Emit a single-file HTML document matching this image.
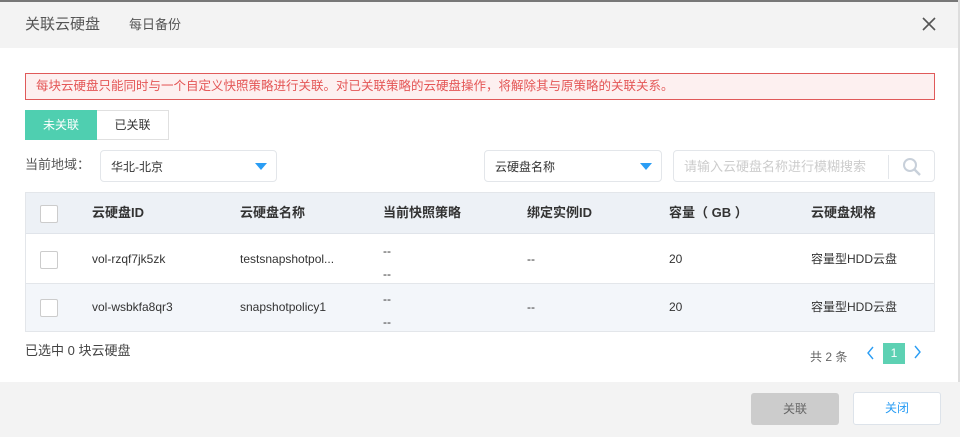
<!DOCTYPE html><html><head><meta charset="utf-8"><style>
*{box-sizing:border-box;margin:0;padding:0}
body{width:960px;height:437px;overflow:hidden;background:#fff;font-family:"Liberation Sans","Noto Sans CJK SC",sans-serif;font-size:12px;color:#333;position:relative;line-height:16px}
.a{position:absolute}
.top{left:0;top:0;width:960px;height:48px;background:#f3f3f3;border-top:2px solid #777}
.foot{left:0;top:382px;width:960px;height:55px;background:#f3f3f3}
.cb{width:18px;height:18px;border:1px solid #ccc;border-radius:2px;background:#fff}
.th{font-weight:bold;font-size:13px;color:#333}
.sel{border:1px solid #e3e6ea;border-radius:4px;background:#fff}
.tri{width:0;height:0;border-left:6px solid transparent;border-right:6px solid transparent;border-top:7px solid #2a9df4}
</style></head><body>
<div class="a top"></div>
<div class="a" style="left:958px;top:0;width:2px;height:437px;background:#ddd"></div>
<div class="a" style="left:25px;top:15px;font-size:15px;color:#555;line-height:20px">关联云硬盘</div>
<div class="a" style="left:129px;top:17px;font-size:13px;color:#555">每日备份</div>
<svg class="a" style="left:921px;top:16px" width="16" height="16"><path d="M2 2L14 14M14 2L2 14" stroke="#555" stroke-width="1.6"/></svg>
<div class="a" style="left:25px;top:73px;width:910px;height:27px;border:1px solid #e05a5a;background:#fdf0f0;color:#e45656;padding:4px 10px;font-size:12.5px;white-space:nowrap;line-height:17px">每块云硬盘只能同时与一个自定义快照策略进行关联。对已关联策略的云硬盘操作，将解除其与原策略的关联关系。</div>
<div class="a" style="left:25px;top:110px;width:72px;height:30px;background:#4fcfb0;color:#fff;text-align:center;line-height:30px">未关联</div>
<div class="a" style="left:97px;top:110px;width:72px;height:30px;border:1px solid #e0e0e0;border-left:none;text-align:center;line-height:28px">已关联</div>
<div class="a" style="left:25px;top:157px;font-size:13px;color:#555">当前地域：</div>
<div class="a sel" style="left:100px;top:150px;width:177px;height:32px"><span class="a" style="left:10px;top:8px">华北-北京</span><div class="a tri" style="left:154px;top:12px"></div></div>
<div class="a sel" style="left:484px;top:150px;width:178px;height:32px"><span class="a" style="left:10px;top:8px">云硬盘名称</span><div class="a tri" style="left:155px;top:12px"></div></div>
<div class="a sel" style="left:673px;top:150px;width:262px;height:32px"><span class="a" style="left:10px;top:8px;color:#ccc;font-size:13px">请输入云硬盘名称进行模糊搜索</span><div class="a" style="left:214px;top:4px;width:1px;height:24px;background:#e3e6ea"></div><svg class="a" style="left:228px;top:6px" width="20" height="20"><circle cx="8" cy="8" r="6" stroke="#c8d0da" stroke-width="2" fill="none"/><path d="M12.5 12.5L18 18" stroke="#c8d0da" stroke-width="2.4"/></svg></div>
<div class="a" style="left:25px;top:192px;width:910px;height:140px;border:1px solid #e3e6ea"></div>
<div class="a" style="left:26px;top:193px;width:908px;height:41px;background:#edf1f6;border-bottom:1px solid #e0e4ea"></div>
<div class="a" style="left:26px;top:283px;width:908px;height:48px;background:#f3f6fa;border-top:1px solid #e3e6ea"></div>
<div class="a cb" style="left:40px;top:205px"></div>
<div class="a cb" style="left:40px;top:251px"></div>
<div class="a cb" style="left:40px;top:299px"></div>
<div class="a th" style="left:92px;top:205px">云硬盘ID</div>
<div class="a th" style="left:240px;top:205px">云硬盘名称</div>
<div class="a th" style="left:383px;top:205px">当前快照策略</div>
<div class="a th" style="left:527px;top:205px">绑定实例ID</div>
<div class="a th" style="left:669px;top:205px">容量（ GB ）</div>
<div class="a th" style="left:811px;top:205px">云硬盘规格</div>
<div class="a" style="left:92px;top:251px">vol-rzqf7jk5zk</div>
<div class="a" style="left:240px;top:251px">testsnapshotpol...</div>
<div class="a" style="left:383px;top:240px;line-height:23px">--<br>--</div>
<div class="a" style="left:527px;top:251px">--</div>
<div class="a" style="left:669px;top:251px">20</div>
<div class="a" style="left:811px;top:251px">容量型HDD云盘</div>
<div class="a" style="left:92px;top:299px">vol-wsbkfa8qr3</div>
<div class="a" style="left:240px;top:299px">snapshotpolicy1</div>
<div class="a" style="left:383px;top:288px;line-height:23px">--<br>--</div>
<div class="a" style="left:527px;top:299px">--</div>
<div class="a" style="left:669px;top:299px">20</div>
<div class="a" style="left:811px;top:299px">容量型HDD云盘</div>
<div class="a" style="left:25px;top:343px;font-size:13px;color:#444">已选中 0 块云硬盘</div>
<div class="a" style="left:810px;top:349px;color:#666">共 2 条</div>
<svg class="a" style="left:866px;top:346px" width="10" height="14"><path d="M7 1L2 7L7 13" stroke="#2a9df4" stroke-width="1.4" fill="none"/></svg>
<div class="a" style="left:883px;top:343px;width:22px;height:21px;background:#5dd1b3;color:#fff;text-align:center;line-height:21px">1</div>
<svg class="a" style="left:913px;top:345px" width="10" height="14"><path d="M2 1L7 7L2 13" stroke="#2a9df4" stroke-width="1.4" fill="none"/></svg>
<div class="a foot"></div>
<div class="a" style="left:751px;top:393px;width:88px;height:32px;background:#ccc;border-radius:3px;text-align:center;line-height:32px;color:#666">关联</div>
<div class="a" style="left:853px;top:392px;width:88px;height:33px;background:#fff;border:1px solid #dde3ea;border-radius:3px;text-align:center;line-height:31px;color:#2a9df4">关闭</div>
</body></html>
